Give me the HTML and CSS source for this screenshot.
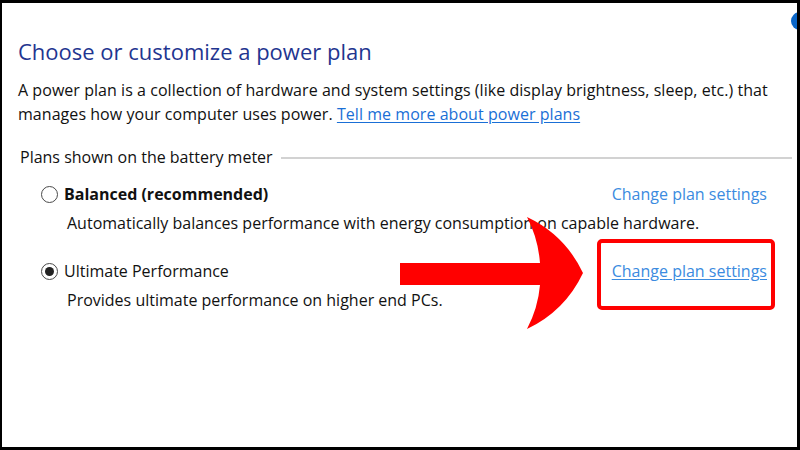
FILE: index.html
```html
<!DOCTYPE html>
<html>
<head>
<meta charset="utf-8">
<link rel="stylesheet" href="styles.css">
</head>
<body>
<div class="frame">
  <div class="dot"></div>
  <h1 class="title">Choose or customize a power plan</h1>
  <p class="desc">A power plan is a collection of hardware and system settings (like display brightness, sleep, etc.) that manages how your computer uses power. <a class="link" href="#">Tell me more about power plans</a></p>
  <div class="group-head"><span class="group-label">Plans shown on the battery meter</span><span class="rule"></span></div>
  <div class="plan">
    <div class="plan-row">
      <span class="radio"></span>
      <span class="plan-name bold">Balanced (recommended)</span>
      <a class="change" href="#">Change plan settings</a>
    </div>
    <p class="plan-desc">Automatically balances performance with energy consumption on capable hardware.</p>
  </div>
  <div class="plan">
    <div class="plan-row">
      <span class="radio checked"></span>
      <span class="plan-name">Ultimate Performance</span>
      <a class="change underline" href="#">Change plan settings</a>
    </div>
    <p class="plan-desc">Provides ultimate performance on higher end PCs.</p>
  </div>
  <div class="highlight"></div>
  <svg class="arrow" width="200" height="120" viewBox="390 212 200 120">
    <path d="M400,263 L540,263 Q538,238 527,217 Q565,235 583,273 Q565,311 527,329 Q538,308 540,285 L400,285 Z" fill="#ff0000"/>
  </svg>
</div>
</body>
</html>
```
FILE: styles.css
```css
html, body {
  margin: 0;
  padding: 0;
  background: #fff;
}
.frame {
  position: relative;
  width: 800px;
  height: 450px;
  box-sizing: border-box;
  border: 3px solid #000;
  border-left-width: 2px;
  overflow: hidden;
  padding: 0 18px 0 16px;
  font-family: "Open Sans", "Noto Sans", sans-serif;
  color: #111;
}
.dot {
  position: absolute;
  right: -12px;
  top: 9px;
  width: 18px;
  height: 18px;
  border-radius: 50%;
  background: #0a66c8;
}
.title {
  margin: 0;
  padding-top: 33px;
  font-size: 22px;
  font-weight: 400;
  line-height: 30px;
  color: #1f3590;
}
.desc {
  margin: 12px 0 0;
  font-size: 16px;
  letter-spacing: 0.05px;
  line-height: 24px;
}
.link {
  color: #1a6fd6;
  text-decoration: underline;
  text-underline-offset: 2px;
}
.group-head {
  display: flex;
  align-items: center;
  margin: 19px -13px 0 0;
  gap: 8px;
}
.group-label {
  padding-left: 2px;
  font-size: 16px;
  line-height: 24px;
}
.rule {
  flex: 1;
  height: 2px;
  background: #d2d2d2;
  margin-top: 1px;
}
.plan {
  padding: 0 12px 0 23px;
}
.plan-row {
  display: flex;
  align-items: center;
  margin-top: 13px;
  height: 24px;
}
.radio {
  width: 17px;
  height: 17px;
  border: 1.5px solid #4a4a4a;
  border-radius: 50%;
  box-sizing: border-box;
  margin-right: 6px;
  display: flex;
  align-items: center;
  justify-content: center;
  flex: none;
}
.radio.checked::after {
  content: "";
  width: 9px;
  height: 9px;
  border-radius: 50%;
  background: #222;
}
.plan-name {
  font-size: 16px;
  flex: 1;
}
.bold {
  font-weight: 700;
}
.change {
  font-size: 16px;
  color: #3b8be0;
  text-decoration: none;
}
.change.underline {
  text-decoration: underline;
  text-underline-offset: 2px;
}
.plan-desc {
  margin: 5px 0 0 26px;
  font-size: 16px;
  line-height: 24px;
}
.plan + .plan .plan-row {
  margin-top: 24px;
}
.highlight {
  position: absolute;
  left: 595px;
  top: 236px;
  width: 178px;
  height: 71px;
  box-sizing: border-box;
  border: 4px solid #ff0000;
  border-radius: 5px;
}
.arrow {
  position: absolute;
  left: 388px;
  top: 209px;
}
```
